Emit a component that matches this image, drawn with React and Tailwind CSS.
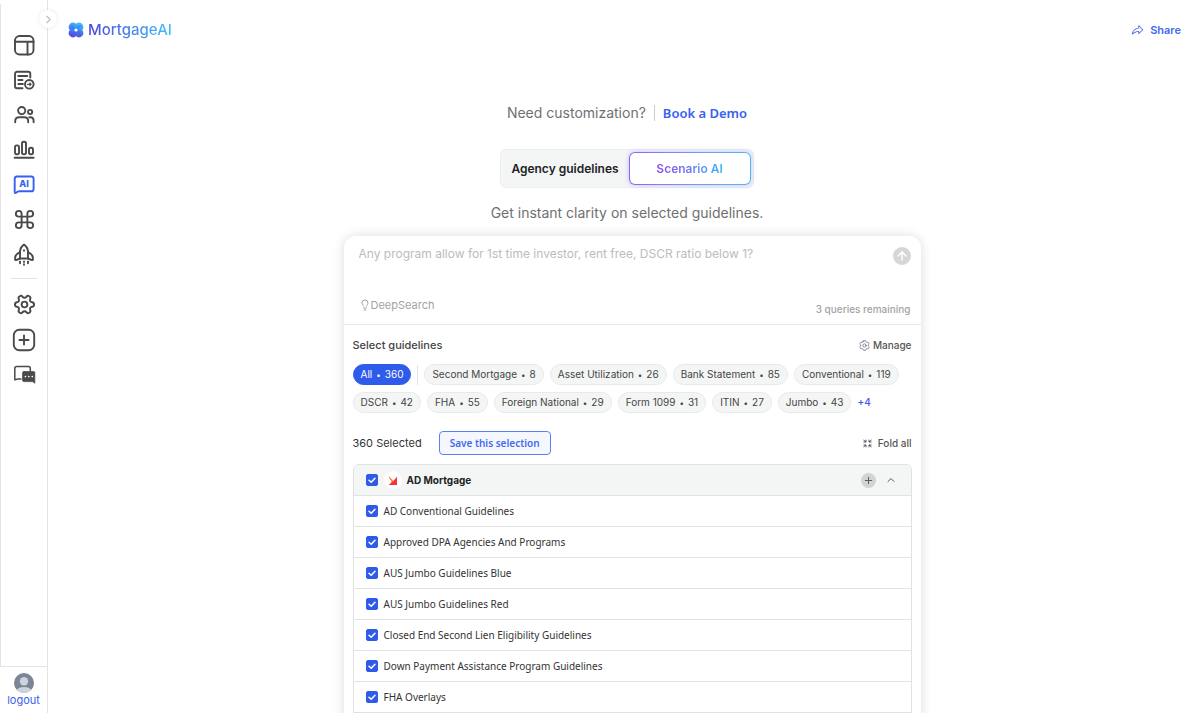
import React, { useState } from 'react';
import { Command, Settings, Lightbulb, ArrowUp, ChevronRight, ChevronUp, Plus } from 'lucide-react';
import { HiOutlineCog6Tooth } from 'react-icons/hi2';
import { PiShareFat } from 'react-icons/pi';

const Icon = ({ children }) => (
    <svg width="24" height="24" viewBox="0 0 24 24" fill="none" stroke="currentColor" strokeWidth="1.9" strokeLinecap="round" strokeLinejoin="round" aria-hidden="true">
        {children}
    </svg>
);

const DashboardIcon = () => (
    <Icon>
        <rect x="3" y="3" width="18.5" height="18.5" rx="4.5" />
        <path d="M3 8.8h18.5M15.5 8.8v12.7" />
    </Icon>
);

const DocumentIcon = () => (
    <Icon>
        <path d="M18.3 9.5V5.8a2 2 0 0 0-2-2H5a2 2 0 0 0-2 2v12.4a2 2 0 0 0 2 2h5.5" />
        <path d="M6.3 8h9M6.3 12h4.2M6.3 16h4.6" />
        <circle cx="17.3" cy="16.3" r="4.3" />
        <path d="M15.5 16.3h3.4M17.9 15l1.2 1.3-1.2 1.3" strokeWidth="1.2" />
    </Icon>
);

const PeopleIcon = () => (
    <Icon>
        <circle cx="9.7" cy="7.6" r="3.6" />
        <circle cx="18.1" cy="9" r="2.1" />
        <path d="M3.2 19.3v-1c0-2.6 1.6-4.1 4-4.1h5c2.4 0 4 1.5 4 4.1v1" />
        <path d="M17.3 14.2h1c2.2 0 3.3 1.4 3.3 3.6v1.5" />
    </Icon>
);

const ChartIcon = () => (
    <Icon>
        <rect x="3" y="7.4" width="4" height="8.8" rx="1.8" />
        <rect x="10" y="3.8" width="4" height="12.4" rx="1.8" />
        <rect x="17" y="9.8" width="4" height="6.4" rx="1.8" />
        <path d="M2.6 19.8h19" />
    </Icon>
);

const ChatAiIcon = () => (
    <Icon>
        <path d="M5 3.500h14.2a2.4 2.4 0 0 1 2.4 2.4v10a2.4 2.4 0 0 1-2.4 2.4H7.5c-1.5 0-2.6.6-3.6 1.6-.5.4-1.2.1-1.2-.6V5.900A2.4 2.4 0 0 1 5 3.500z" />
        <text x="12.1" y="14.4" textAnchor="middle" fontSize="9" fontWeight="800" fontFamily="Inter, sans-serif" fill="currentColor" stroke="none">AI</text>
    </Icon>
);

const RocketIcon = () => (
    <Icon>
        <path d="M12 1.600c-2.900 2-4 4.500-4 7.600v6.300h8V9.200c0-3.100-1.100-5.600-4-7.600z" />
        <path d="M8 9.300c-2.900 1-4.800 3-4.900 5.600v1.600c0 .5.4.8.9.6l4-1.600M16 9.300c2.900 1 4.800 3 4.900 5.600v1.600c0 .5-.4.8-.9.6l-4-1.600" />
        <path d="M12 7.300v.4M8 18.500v1.700M12 18.500v.5M12 21.300v.4M16 18.500v1.700" />
    </Icon>
);

const AddIcon = () => (
    <Icon>
        <rect x="1.8" y="1.8" width="20.4" height="20.4" rx="5.5" />
        <path d="M12 7.400v9.200M7.400 12h9.200" />
    </Icon>
);

const MessagesIcon = () => (
    <Icon>
        <path d="M9 16H5.500c-.9 0-1.500.8-2.700.8V5.600a2 2 0 0 1 2-2h11.500a2 2 0 0 1 2 2v2.600" strokeWidth="1.5" />
        <path d="M12 8.600h9.800c.6 0 1 .4 1 1v10.600l-2.300-1.600H12c-.9 0-1.400-.5-1.400-1.400v-7.200c0-.9.5-1.400 1.400-1.400z" fill="currentColor" strokeWidth="0.8" />
        <path d="M13.400 13.600h.1M16.800 13.600h.1M20.200 13.600h.1" stroke="white" strokeWidth="1.6" />
    </Icon>
);

const Logo = () => (
    <svg width="16" height="16" viewBox="0 0 16 16" aria-hidden="true">
        <defs>
            <linearGradient id="petals" gradientUnits="userSpaceOnUse" x1="10" y1="0" x2="5" y2="16">
                <stop offset="0" stopColor="#42c3fa" />
                <stop offset="0.5" stopColor="#3f83f0" />
                <stop offset="1" stopColor="#5a3fd6" />
            </linearGradient>
        </defs>
        <g fill="url(#petals)">
            <circle cx="5" cy="5" r="4.4" />
            <circle cx="11" cy="5" r="4.4" />
            <circle cx="5" cy="11" r="4.4" />
            <circle cx="11" cy="11" r="4.4" />
        </g>
        <path d="M8 8C5.500 7.500 3.500 5 4 2.500M8 8c.5-2.500 3-4.500 5.500-4M8 8c2.500.5 4.500 3 4 5.500M8 8c-.5 2.500-3 4.500-5.500 4" stroke="#2d4fd8" strokeOpacity="0.4" fill="none" />
        <circle cx="8" cy="8" r="1.6" fill="white" />
    </svg>
);

const topLinks = [
    { label: 'Dashboard', icon: <DashboardIcon /> },
    { label: 'Loans', icon: <DocumentIcon /> },
    { label: 'Contacts', icon: <PeopleIcon /> },
    { label: 'Reports', icon: <ChartIcon /> },
    { label: 'Mortgage AI', icon: <ChatAiIcon />, active: true },
    { label: 'Shortcuts', icon: <Command size={23} strokeWidth={2} /> },
    { label: 'Launch', icon: <RocketIcon /> },
];

const bottomLinks = [
    { label: 'Settings', icon: <Settings size={23} strokeWidth={2} className="rotate-90" /> },
    { label: 'Add', icon: <AddIcon /> },
    { label: 'Messages', icon: <MessagesIcon /> },
];

const categories = [
    { name: 'All', count: 360 },
    { name: 'Second Mortgage', count: 8 },
    { name: 'Asset Utilization', count: 26 },
    { name: 'Bank Statement', count: 85 },
    { name: 'Conventional', count: 119 },
    { name: 'DSCR', count: 42 },
    { name: 'FHA', count: 55 },
    { name: 'Foreign National', count: 29 },
    { name: 'Form 1099', count: 31 },
    { name: 'ITIN', count: 27 },
    { name: 'Jumbo', count: 43 },
];

const guidelines = [
    'AD Conventional Guidelines',
    'Approved DPA Agencies And Programs',
    'AUS Jumbo Guidelines Blue',
    'AUS Jumbo Guidelines Red',
    'Closed End Second Lien Eligibility Guidelines',
    'Down Payment Assistance Program Guidelines',
    'FHA Overlays',
];

const NavLinks = ({ links }) => (
    <ul>
        {links.map((link) => (
            <li key={link.label}>
                <a href="#" aria-label={link.label} className={`flex h-[35px] items-center justify-center ${link.active ? 'text-[#3860f0]' : 'text-[#4a4a4a]'}`}>
                    {link.icon}
                </a>
            </li>
        ))}
    </ul>
);

const Sidebar = () => (
    <aside className="relative flex w-12 shrink-0 flex-col border-r border-[#e4e4e4]">
        <button aria-label="Expand menu" className="absolute top-2.5 -right-2.5 flex size-[18px] items-center justify-center rounded-full bg-white text-[#bbb] shadow-[0_0_4px_rgba(0,0,0,0.1)]">
            <ChevronRight size={13} />
        </button>
        <nav className="mt-1 grow border-l border-[#e4e4e4] pt-[23px]">
            <NavLinks links={topLinks} />
            <hr className="mx-2.5 mt-1.5 mb-2 border-[#e4e4e4]" />
            <NavLinks links={bottomLinks} />
        </nav>
        <div className="flex flex-col items-center border-t border-[#e4e4e4] pt-1.5 pb-1.5">
            <svg width="20" height="20" viewBox="0 0 20 20" aria-hidden="true">
                <clipPath id="avatar"><circle cx="10" cy="10" r="10" /></clipPath>
                <g clipPath="url(#avatar)">
                    <rect width="20" height="20" fill="#7c8593" />
                    <circle cx="10" cy="8.3" r="4.2" fill="#cbd3de" />
                    <ellipse cx="10" cy="18" rx="7.5" ry="4" fill="#cbd3de" />
                </g>
            </svg>
            <a href="#" className="text-[11px] leading-[14px] text-[#3860f0]">logout</a>
        </div>
    </aside>
);

const Checkbox = ({ id, label }) => (
    <span className="grid size-3 shrink-0 place-items-center">
        <input id={id} type="checkbox" defaultChecked aria-label={label} className="peer col-start-1 row-start-1 size-3 appearance-none rounded-[2px] border border-[#bbb] bg-white checked:border-[#2f5bea] checked:bg-[#2f5bea]" />
        <svg viewBox="0 0 12 12" className="pointer-events-none invisible col-start-1 row-start-1 size-3 peer-checked:visible" fill="none" stroke="white" strokeWidth="1.5" strokeLinecap="round" strokeLinejoin="round" aria-hidden="true">
            <path d="M3 6.200l2.200 2.100L9 4.200" />
        </svg>
    </span>
);

const GuidelineRow = ({ id, name }) => (
    <li className="flex h-[31px] items-center gap-1.5 border-t border-[#e2e4e4] px-3">
        <Checkbox id={id} />
        <label htmlFor={id} className="font-['Noto_Sans',sans-serif] text-[10px] text-[#333]">{name}</label>
    </li>
);

const Chip = ({ category, active, onClick }) => (
    <button
        onClick={onClick}
        className={`flex h-[21px] items-center gap-1 rounded-full border px-[7px] text-[10px] whitespace-nowrap ${
            active ? 'border-[#2f5bea] bg-[#2f5bea] text-white' : 'border-[#e8eaea] bg-[#f4f6f6] text-[#444]'
        }`}
    >
        <span>{category.name}</span>
        <span className="text-[8px]">•</span>
        <span>{category.count}</span>
    </button>
);

const Guidelines = () => {
    const [selected, setSelected] = useState('All');

    return (
        <section className="px-[9px] pt-3 pb-2">
            <div className="flex h-4 items-center justify-between">
                <h2 className="text-[11px] font-medium text-[#444]">Select guidelines</h2>
                <button className="flex items-center gap-0.5 text-[10px] font-medium text-[#555]">
                    <HiOutlineCog6Tooth size={13} className="text-[#667085]" />
                    Manage
                </button>
            </div>
            <div className="mt-[11px] flex flex-wrap items-center gap-x-1.5 gap-y-[7px]">
                {categories.map((category) => (
                    <React.Fragment key={category.name}>
                        <Chip category={category} active={selected === category.name} onClick={() => setSelected(category.name)} />
                        {category.name === 'All' && <span className="h-5 w-px bg-[#e4e4e4]" />}
                    </React.Fragment>
                ))}
                <button className="text-[10px] font-medium text-[#3f55f0]">+4</button>
            </div>
            <div className="mt-[18px] flex items-center">
                <p className="text-[11px] text-[#333]">360 Selected</p>
                <button className="ml-[17px] h-6 rounded border border-[#5b80f5] bg-[#f5f7ff] px-2.5 font-['Noto_Sans',sans-serif] text-[10px] font-semibold text-[#4468ee]">
                    Save this selection
                </button>
                <button className="ml-auto flex items-center gap-1.5 text-[10px] font-medium text-[#555]">
                    <svg width="9" height="9" viewBox="0 0 9 9" fill="none" stroke="#555" aria-hidden="true">
                        <path d="M.5 1l2.500 2M3 .7V3H.5M8.500 1L6 3M6 .7V3h2.500M.5 8L3 6M3 8.300V6H.5M8.500 8L6 6M6 8.300V6h2.500" />
                    </svg>
                    Fold all
                </button>
            </div>
            <div className="mt-[9px] rounded-t-md border border-[#dfe2e2]">
                <div className="flex h-[30px] items-center rounded-t-md bg-[#f4f6f6] pr-[14px] pl-3">
                    <Checkbox id="lender" label="AD Mortgage" />
                    <span className="ml-1.5 flex size-[18px] items-center justify-center rounded-full bg-white">
                        <svg width="9" height="9" viewBox="0 0 9 9" aria-hidden="true">
                            <path d="M.3 0l5 5L9 .8V9H.8l3-3z" fill="#f5333b" />
                            <path d="M.3 0l3.500 6L.8 9l4.500-4z" fill="#f79433" />
                        </svg>
                    </span>
                    <label htmlFor="lender" className="ml-[5px] text-[10px] font-bold text-[#222]">AD Mortgage</label>
                    <button aria-label="Add guideline" className="ml-auto flex size-[15px] items-center justify-center rounded-full bg-[#d2d3d3] text-[#555]">
                        <Plus size={11} />
                    </button>
                    <button aria-label="Collapse" className="ml-[9px] text-[#555]">
                        <ChevronUp size={12} />
                    </button>
                </div>
                <ul>
                    {guidelines.map((name, i) => (
                        <GuidelineRow key={name} id={`guideline-${i}`} name={name} />
                    ))}
                </ul>
            </div>
        </section>
    );
};

const QueryBox = () => (
    <form className="flex flex-col border-b border-[#e8e8e8] pt-2.5 pr-2.5 pb-2 pl-[15px]" onSubmit={(e) => e.preventDefault()}>
        <div className="flex items-start">
            <textarea
                aria-label="Your question"
                placeholder="Any program allow for 1st time investor, rent free, DSCR ratio below 1?"
                className="h-[51px] grow resize-none text-xs leading-4 outline-none placeholder:text-[#bcbcbc]"
            />
            <button aria-label="Send" className="mt-px flex size-[18px] items-center justify-center rounded-full bg-[#d6d6d6] text-white">
                <ArrowUp size={14} strokeWidth={2.5} />
            </button>
        </div>
        <div className="flex items-start justify-between text-[#a3a3a3]">
            <button className="flex h-4 items-center text-[11px]">
                <Lightbulb size={12} />
                DeepSearch
            </button>
            <span className="mt-[5px] text-[10px] leading-[14px] font-medium">3 queries remaining</span>
        </div>
    </form>
);

const ModeSwitch = () => (
    <div className="flex items-center rounded-md border border-[#eceeee] bg-[#f4f6f6] p-0.5 text-xs font-semibold">
        <button className="h-[33px] px-2 text-[#222]">Agency guidelines</button>
        <button className="ml-0.5 h-[33px] w-[122px] rounded-md bg-linear-to-r from-[#9a5cf5] to-[#4cb8fa] p-px shadow-[0_0_4px_1px_rgba(120,150,255,0.35)]">
            <span className="flex h-full items-center justify-center rounded-[5px] bg-white">
                <span className="bg-linear-to-r from-[#8f48e8] via-[#6d78f2] to-[#2cb5f8] bg-clip-text text-transparent">Scenario AI</span>
            </span>
        </button>
    </div>
);

const App = () => {
    return (
        <div className="flex h-screen bg-white font-[Inter,sans-serif]">
            <Sidebar />
            <main className="flex min-w-0 grow flex-col overflow-y-auto [scrollbar-width:none]">
                <header className="flex h-[60px] shrink-0 items-center justify-between pr-[19px] pl-5">
                    <a href="#" className="flex items-center gap-1">
                        <Logo />
                        <span className="bg-linear-to-r from-[#4a42d8] to-[#3fc0fa] bg-clip-text text-[15px] font-medium text-transparent">MortgageAI</span>
                    </a>
                    <button className="flex items-center gap-1.5 text-[11px] font-semibold text-[#4468ee]">
                        <PiShareFat size={13} />
                        Share
                    </button>
                </header>
                <div className="flex flex-col items-center pt-[43px] pl-1.5">
                    <p className="flex h-5 items-center text-sm text-[#707070]">
                        Need customization?
                        <a href="#" className="ml-2 border-l border-[#ccc] pl-2 font-['Noto_Sans',sans-serif] text-[13px] leading-4 font-semibold text-[#3860f0]">Book a Demo</a>
                    </p>
                    <div className="mt-[26px]">
                        <ModeSwitch />
                    </div>
                    <p className="mt-[15px] text-sm text-[#707070]">Get instant clarity on selected guidelines.</p>
                </div>
                <div className="mt-[13px] flex justify-center pl-4">
                    <div className="w-full max-w-[577px] rounded-t-xl bg-white shadow-[0_0_12px_rgba(0,0,0,0.14)]">
                        <QueryBox />
                        <Guidelines />
                    </div>
                </div>
            </main>
        </div>
    );
};

export default App;
